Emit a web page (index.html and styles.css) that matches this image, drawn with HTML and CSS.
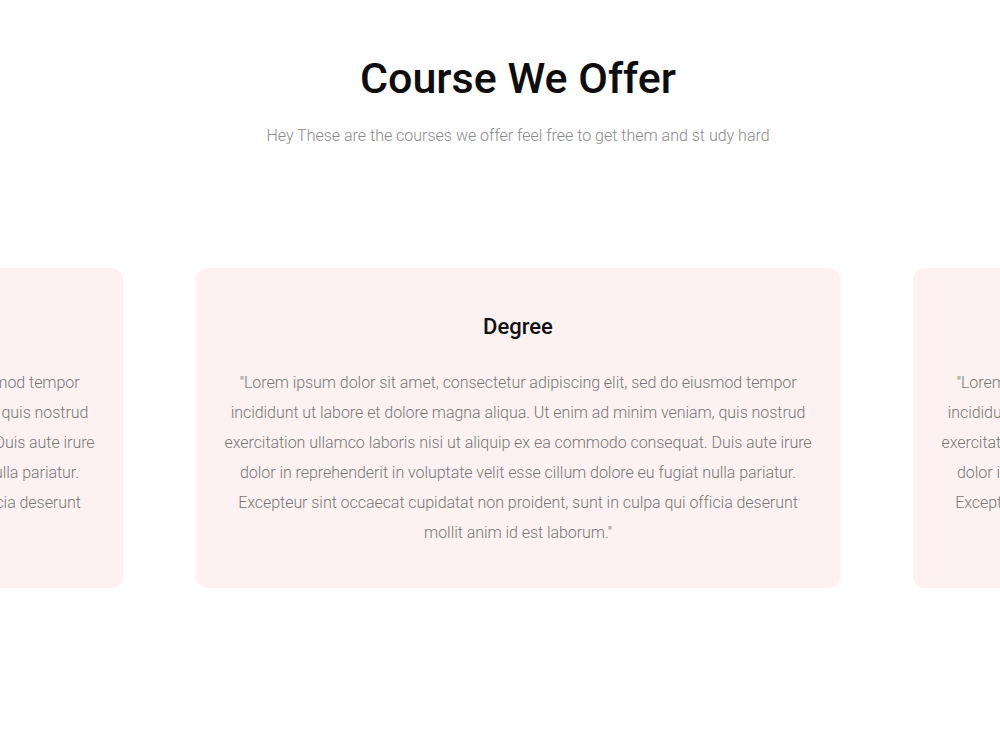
FILE: index.html
```html
<!DOCTYPE html>
<html>
<head>
<meta charset="utf-8">
<link rel="stylesheet" href="styles.css">
</head>
<body>
<section class="courses">
  <h1 class="title">Course We Offer</h1>
  <p class="subtitle">Hey These are the courses we offer feel free to get them and st udy hard</p>
  <div class="track">
    <div class="card">
      <h2 class="card-title">Degree</h2>
      <p class="card-text">"Lorem ipsum dolor sit amet, consectetur adipiscing elit, sed do eiusmod tempor incididunt ut labore et dolore magna aliqua. Ut enim ad minim veniam, quis nostrud exercitation ullamco laboris nisi ut aliquip ex ea commodo consequat. Duis aute irure dolor in reprehenderit in voluptate velit esse cillum dolore eu fugiat nulla pariatur. Excepteur sint occaecat cupidatat non proident, sunt in culpa qui officia deserunt mollit anim id est laborum."</p>
    </div>
    <div class="card">
      <h2 class="card-title">Degree</h2>
      <p class="card-text">"Lorem ipsum dolor sit amet, consectetur adipiscing elit, sed do eiusmod tempor incididunt ut labore et dolore magna aliqua. Ut enim ad minim veniam, quis nostrud exercitation ullamco laboris nisi ut aliquip ex ea commodo consequat. Duis aute irure dolor in reprehenderit in voluptate velit esse cillum dolore eu fugiat nulla pariatur. Excepteur sint occaecat cupidatat non proident, sunt in culpa qui officia deserunt mollit anim id est laborum."</p>
    </div>
    <div class="card">
      <h2 class="card-title">Degree</h2>
      <p class="card-text">"Lorem ipsum dolor sit amet, consectetur adipiscing elit, sed do eiusmod tempor incididunt ut labore et dolore magna aliqua. Ut enim ad minim veniam, quis nostrud exercitation ullamco laboris nisi ut aliquip ex ea commodo consequat. Duis aute irure dolor in reprehenderit in voluptate velit esse cillum dolore eu fugiat nulla pariatur. Excepteur sint occaecat cupidatat non proident, sunt in culpa qui officia deserunt mollit anim id est laborum."</p>
    </div>
  </div>
</section>
</body>
</html>
```
FILE: styles.css
```css
html, body {
  margin: 0;
  padding: 0;
  background: #ffffff;
}
body {
  font-family: "Roboto", "Liberation Sans", sans-serif;
  overflow: hidden;
  width: 1000px;
  height: 750px;
}
.courses {
  padding: 52px 0 0 36px;
  text-align: center;
}
.title {
  margin: 0;
  font-size: 43px;
  line-height: 52px;
  font-weight: 500;
  color: #0d0d0d;
}
.subtitle {
  margin: 21px 0 0;
  font-size: 16px;
  line-height: 22px;
  font-weight: 300;
  color: #8a8a8a;
}
.track {
  display: flex;
  justify-content: center;
  gap: 73px;
  margin-top: 121px;
}
.card {
  flex: 0 0 644px;
  box-sizing: border-box;
  height: 320px;
  padding: 44px 24px 40px;
  background: #fdf2f1;
  border-radius: 12px;
}
.card-title {
  margin: 0;
  font-size: 22px;
  line-height: 30px;
  font-weight: 500;
  color: #111;
}
.card-text {
  margin: 26px 0 0;
  font-size: 16px;
  line-height: 30px;
  font-weight: 300;
  letter-spacing: -0.05px;
  color: #777;
}
```
